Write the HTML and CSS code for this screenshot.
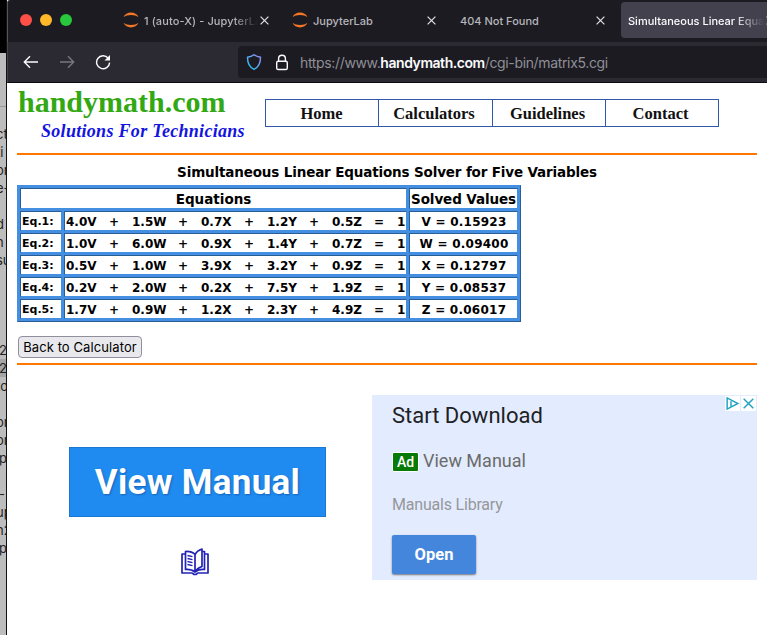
FILE: index.html
```html
<!DOCTYPE html>
<html lang="en">
<head>
<meta charset="utf-8">
<title>Simultaneous Linear Equations Solver</title>
<link rel="stylesheet" href="styles.css">
</head>
<body>
<div class="desktop">
  <aside class="behind">
    <div class="behind-top"></div>
    <div class="behind-bar"></div>
    <div class="behind-text">
      <p>ct</p><p>ti</p><p>or</p><p>e-</p><p></p><p>d</p><p>n</p><p>su</p><p></p><p></p><p></p><p></p><p class="near">2</p><p class="near mark">2</p><p>to</p><p></p><p>or</p><p>or</p><p class="near">p</p><p></p><p class="near">-</p><p>up</p><p>n2</p><p class="near">p</p>
    </div>
  </aside>
  <div class="window">
    <header class="tabs">
      <div class="lights"><i class="red"></i><i class="yellow"></i><i class="green"></i></div>
      <div class="tab first">
        <svg class="jup" viewBox="0 0 16 16"><path d="M.5 5.2C1.8 2.2 4.700.6 8 .6s6.200 1.600 7.500 4.600C13.600 3.700 11 3 8 3S2.400 3.700.5 5.200zM.5 10.800c1.300 3 4.200 4.600 7.500 4.600s6.200-1.600 7.500-4.600C13.600 12.300 11 13 8 13s-5.600-.7-7.500-2.200z"/></svg>
        <span class="label fade">1 (auto-X) - JupyterLab</span>
        <svg class="x" viewBox="0 0 9 9"><path d="M.6.6l7.800 7.800M8.400.6L.6 8.400"/></svg>
      </div>
      <div class="tab second">
        <svg class="jup" viewBox="0 0 16 16"><path d="M.5 5.2C1.8 2.2 4.700.6 8 .6s6.200 1.600 7.500 4.600C13.600 3.700 11 3 8 3S2.400 3.700.5 5.200zM.5 10.800c1.300 3 4.200 4.600 7.500 4.600s6.200-1.600 7.500-4.600C13.600 12.300 11 13 8 13s-5.600-.7-7.500-2.200z"/></svg>
        <span class="label">JupyterLab</span>
        <svg class="x" viewBox="0 0 9 9"><path d="M.6.6l7.800 7.800M8.400.6L.6 8.400"/></svg>
      </div>
      <div class="tab third">
        <span class="label">404 Not Found</span>
        <svg class="x" viewBox="0 0 9 9"><path d="M.6.6l7.800 7.800M8.400.6L.6 8.400"/></svg>
      </div>
      <div class="tab active">
        <span class="label fade">Simultaneous Linear Equations</span>
        <svg class="x" viewBox="0 0 9 9"><path d="M.6.6l7.800 7.800M8.400.6L.6 8.400"/></svg>
      </div>
    </header>
    <div class="toolbar">
      <svg class="tool" viewBox="0 0 16 16"><path d="M15 8H1.500M7 2.300L1.300 8 7 13.700"/></svg>
      <svg class="tool dim" viewBox="0 0 16 16"><path d="M1 8h13.500M9 2.300L14.700 8 9 13.700"/></svg>
      <svg class="tool" viewBox="0 0 16 16"><path d="M13.200 4.200A6.500 6.500 0 1 0 14.600 8.600"/><path class="solid" d="M15 1v5.500H9.500z"/></svg>
      <div class="url">
        <svg class="shield" viewBox="0 0 16 18"><defs><linearGradient id="sg" x1="0" y1="1" x2="1" y2="0"><stop offset="0" stop-color="#19c8f5"/><stop offset="1" stop-color="#9a8cf8"/></linearGradient></defs><path d="M8 1.700C6 3.200 3.700 4 1.500 4.300c0 5.700 1.500 9.900 6.500 12 5-2.100 6.500-6.300 6.500-12C12.300 4 10 3.200 8 1.700z" stroke="url(#sg)"/></svg>
        <svg class="lock" viewBox="0 0 14 17"><rect x="1.700" y="7.200" width="10.600" height="8.300" rx="1.600"/><path d="M3.600 7V4.600a3.400 3.400 0 0 1 6.800 0V7"/></svg>
        <span class="address">https://www.<b>handymath.com</b>/cgi-bin/matrix5.cgi</span>
      </div>
    </div>
    <main class="page">
      <div class="masthead">
        <div class="brand"><div class="name">handymath.com</div><div class="slogan">Solutions For Technicians</div></div>
        <nav class="nav"><a>Home</a><a>Calculators</a><a>Guidelines</a><a>Contact</a></nav>
      </div>
      <div class="rule"></div>
      <h1>Simultaneous Linear Equations Solver for Five Variables</h1>
      <table class="solver">
        <colgroup><col class="c1"><col class="c2"><col class="c3"></colgroup>
        <tr class="head"><th colspan="2">Equations</th><th class="sv">Solved Values</th></tr>
        <tr><td class="eq">Eq.1:</td><td><div class="terms"><span>4.0V</span><span>+</span><span>1.5W</span><span>+</span><span>0.7X</span><span>+</span><span>1.2Y</span><span>+</span><span>0.5Z</span><span>=</span><span>1</span></div></td><td class="val">V = 0.15923</td></tr>
        <tr><td class="eq">Eq.2:</td><td><div class="terms"><span>1.0V</span><span>+</span><span>6.0W</span><span>+</span><span>0.9X</span><span>+</span><span>1.4Y</span><span>+</span><span>0.7Z</span><span>=</span><span>1</span></div></td><td class="val">W = 0.09400</td></tr>
        <tr><td class="eq">Eq.3:</td><td><div class="terms"><span>0.5V</span><span>+</span><span>1.0W</span><span>+</span><span>3.9X</span><span>+</span><span>3.2Y</span><span>+</span><span>0.9Z</span><span>=</span><span>1</span></div></td><td class="val">X = 0.12797</td></tr>
        <tr><td class="eq">Eq.4:</td><td><div class="terms"><span>0.2V</span><span>+</span><span>2.0W</span><span>+</span><span>0.2X</span><span>+</span><span>7.5Y</span><span>+</span><span>1.9Z</span><span>=</span><span>1</span></div></td><td class="val">Y = 0.08537</td></tr>
        <tr><td class="eq">Eq.5:</td><td><div class="terms"><span>1.7V</span><span>+</span><span>0.9W</span><span>+</span><span>1.2X</span><span>+</span><span>2.3Y</span><span>+</span><span>4.9Z</span><span>=</span><span>1</span></div></td><td class="val">Z = 0.06017</td></tr>
      </table>
      <button class="back">Back to Calculator</button>
      <div class="rule"></div>
      <section class="ads">
        <div class="creative">
          <div class="banner">View Manual</div>
          <svg class="book" viewBox="0 0 28 28"><path d="M14 6.500C11.500 4 8 3.300 4.500 3.500v18c3.500-.2 7 .4 9.500 2.500V6.500C15.500 3.800 18 2 21 1v17.500c-3 1-5.500 2.700-7 5.500M21 3.500h2.500v18c-3.500-.2-7 .4-9.500 2.500M4.500 6H1v19h10c1 0 1 1.500 3 1.500s2-1.500 3-1.500h10V6h-3.500"/><path class="thin" d="M6.500 7.500l5 1.200M6.500 10.500l5 1.200M6.500 13.500l5 1.200M6.500 16.500l5 1.200"/></svg>
        </div>
        <div class="offer">
          <div class="choices">
            <span><svg viewBox="0 0 14 14"><path d="M2 1.800v10.400L12 7z"/><path d="M5.600 5v5"/></svg></span>
            <span><svg viewBox="0 0 14 14"><path d="M2.500 2.500l9 9M11.500 2.500l-9 9"/></svg></span>
          </div>
          <div class="title">Start Download</div>
          <div class="sub"><em>Ad</em><span>View Manual</span></div>
          <div class="lib">Manuals Library</div>
          <div class="open">Open</div>
        </div>
      </section>
    </main>
  </div>
</div>
</body>
</html>
```
FILE: styles.css
```css
* { box-sizing: border-box; }
body { margin: 0; background: #000; }
.desktop { display: flex; width: 767px; height: 635px; overflow: hidden; }
svg { display: block; flex: none; fill: none; }

.behind { width: 7px; flex: none; overflow: hidden; border-right: 1px solid #111; background: #bdbdbd; font: 13px/18px Inter, sans-serif; color: #222; }
.behind-top { height: 53px; background: #000; }
.behind-bar { height: 54px; background: #bcbcbc; border-bottom: 1px solid #999; }
.behind-text { padding-top: 18px; }
.behind p { margin: 0; height: 18px; text-indent: -4px; white-space: nowrap; }
.behind p.near { text-indent: -1px; }
.behind p.mark { background: #a5a5a5; }

.window { width: 760px; flex: none; background: #fff; }
.tabs { display: flex; height: 42px; background: #1c1b22; border-left: 1px solid #55545b; border-top-left-radius: 3px; font: 500 11px/14px Inter, sans-serif; color: #b6b6bb; }
.lights { display: flex; gap: 8px; padding: 14px 0 0 12px; width: 116px; flex: none; }
.lights i { width: 12px; height: 12px; border-radius: 50%; }
.red { background: #ff5047; }
.yellow { background: #ffb828; }
.green { background: #28c73c; }
.tab { display: flex; align-items: center; flex: none; height: 40px; white-space: nowrap; }
.first { width: 169px; }
.second { width: 167px; }
.third { width: 161px; }
.jup { width: 16px; height: 16px; fill: #f37726; margin: 0 5px 0 -1px; }
.label { flex: 1; overflow: hidden; padding-top: 2px; }
.fade { -webkit-mask-image: linear-gradient(to right, #000 78%, transparent 100%); mask-image: linear-gradient(to right, #000 78%, transparent 100%); }
.x { width: 9px; height: 9px; stroke: #e2e2e6; stroke-width: 1.2; margin-left: 2px; }
.first .label { flex: 0 0 114px; letter-spacing: .1px; }
.second .label { flex: 0 0 112px; }
.third .label { flex: 0 0 134px; }
.active { width: 160px; height: 36px; margin-top: 2px; padding-left: 7px; background: #42414d; color: #fbfbfe; border-radius: 4px; }
.active .label { flex: 0 0 136px; padding: 2px 0 1px; }

.toolbar { display: flex; align-items: center; height: 41px; background: #2b2a33; border-bottom: 1px solid #0c0c0d; border-left: 1px solid #44434b; }
.tool { width: 16px; height: 16px; stroke: #fbfbfe; stroke-width: 1.4; margin-left: 15px; margin-right: 5px; }
.tool.dim { stroke: #78777e; }
.tool .solid { fill: #fbfbfe; stroke: none; }
.url { display: flex; align-items: center; flex: 1; height: 32px; margin-left: 122px; padding-left: 8px; background: #1c1b22; border-radius: 4px 0 0 4px; }
.shield { width: 16px; height: 18px; stroke-width: 1.4; }
.lock { width: 14px; height: 17px; margin-left: 13px; stroke: #fbfbfe; stroke-width: 1.4; }
.address { margin-left: 11px; padding-top: 2px; font: 14px/18px Inter, sans-serif; letter-spacing: -.35px; color: #8f8f96; white-space: nowrap; }
.address b { font-weight: 600; letter-spacing: -.45px; color: #fbfbfe; }

.page { padding-left: 10px; width: 750px; }
.masthead { display: flex; height: 70px; }
.brand { width: 248px; font-family: "Liberation Serif", serif; font-weight: bold; white-space: nowrap; }
.name { padding: 3px 0 1px 1px; font-size: 30px; line-height: 32px; color: #32a814; }
.slogan { padding: 1px 0 0 24px; font-size: 18px; line-height: 22px; font-style: italic; color: #1414e0; letter-spacing: .3px; }
.nav { display: grid; grid-template-columns: 112px 114px 113px 113px; height: 28px; margin-top: 16px; border: 1px solid #3159a8; font: bold 16.5px/28px "Liberation Serif", serif; text-align: center; color: #111; width: 454px; flex: none; }
.nav a { height: 26px; padding-right: 1px; }
.nav a + a { border-left: 1px solid #3159a8; padding-right: 3px; }
.rule { height: 2px; width: 740px; background: #ff7700; }
h1 { margin: 0; width: 740px; height: 30px; padding-top: 8px; font: bold 13.5px/18px "DejaVu Sans", sans-serif; letter-spacing: -.15px; text-align: center; white-space: nowrap; }

.solver { width: 504px; height: 137px; table-layout: fixed; border-collapse: separate; border-spacing: 2px; border: 1px solid #448fe2; border-right-color: #285d96; border-bottom-color: #285d96; background: #448fe2; font: bold 12px/16px "DejaVu Sans", sans-serif; }
.c1 { width: 42px; }
.c2 { width: 343px; }
.c3 { width: 109px; }
.solver td, .solver th { height: 20px; padding: 2px 1px 0; border: 1px solid; border-color: #285d96 #448fe2 #448fe2 #285d96; background: #fff; white-space: nowrap; text-align: left; }
.solver .head th { height: 21px; padding-top: 1px; font-size: 13.500px; line-height: 18px; text-align: center; }
.solver .sv { letter-spacing: -.1px; }
.solver .eq { font-size: 11px; }
.solver .val { padding-left: 2px; text-align: center; letter-spacing: .25px; }
.terms { display: grid; grid-template-columns: 43px 23px 46px 23px 43px 23px 42px 23px 42px 23px 10px; }

.back { display: block; width: 124px; height: 22px; margin: 14px 0 5px 1px; padding: 0; border: 1px solid #8f8f9d; border-radius: 4px; background: #e9e9ed; font: 13px/20px Inter, sans-serif; letter-spacing: .1px; color: #000; white-space: nowrap; }
.ads { display: flex; padding-top: 30px; }
.creative { width: 355px; padding: 52px 0 0 52px; }
.banner { width: 257px; height: 70px; background: #1f8bf0; border: 1px solid #1b78d2; font: bold 35px/70px Roboto, sans-serif; letter-spacing: .3px; color: #fff; text-align: center; text-shadow: 1px 1px 2px rgba(0,40,100,.4); white-space: nowrap; }
.book { width: 28px; height: 28px; margin: 31px 0 0 112px; stroke: #2222b4; stroke-width: 1.7; stroke-linejoin: round; }
.book .thin { stroke-width: 1.3; }
.offer { position: relative; width: 385px; height: 185px; padding: 7px 0 0 20px; background: #e3ecfe; font-family: Roboto, sans-serif; }
.choices { position: absolute; top: 1px; right: 1px; display: flex; gap: 1px; }
.choices span { width: 15px; height: 15px; background: #fff; }
.choices svg { width: 15px; height: 15px; stroke: #24a4c4; stroke-width: 1.4; }
.title { font-size: 22px; line-height: 28px; color: #202124; }
.sub { display: flex; align-items: center; height: 24px; margin-top: 18px; font-size: 18px; color: #6b6b6b; }
.sub em { width: 27px; height: 20px; margin: 3px 4px 0 0; border: 1px solid #fff; border-radius: 2px; background: #077a07; color: #fff; font: 500 14px/18px Roboto, sans-serif; text-align: center; }
.lib { margin-top: 23px; font-size: 16px; line-height: 20px; letter-spacing: -.2px; color: #96979b; }
.open { width: 84px; height: 39px; margin-top: 20px; border-radius: 2px; background: #4486db; box-shadow: 0 1px 2px rgba(0,0,0,.5); color: #fff; font-weight: bold; font-size: 16.500px; line-height: 39px; text-align: center; }
```
